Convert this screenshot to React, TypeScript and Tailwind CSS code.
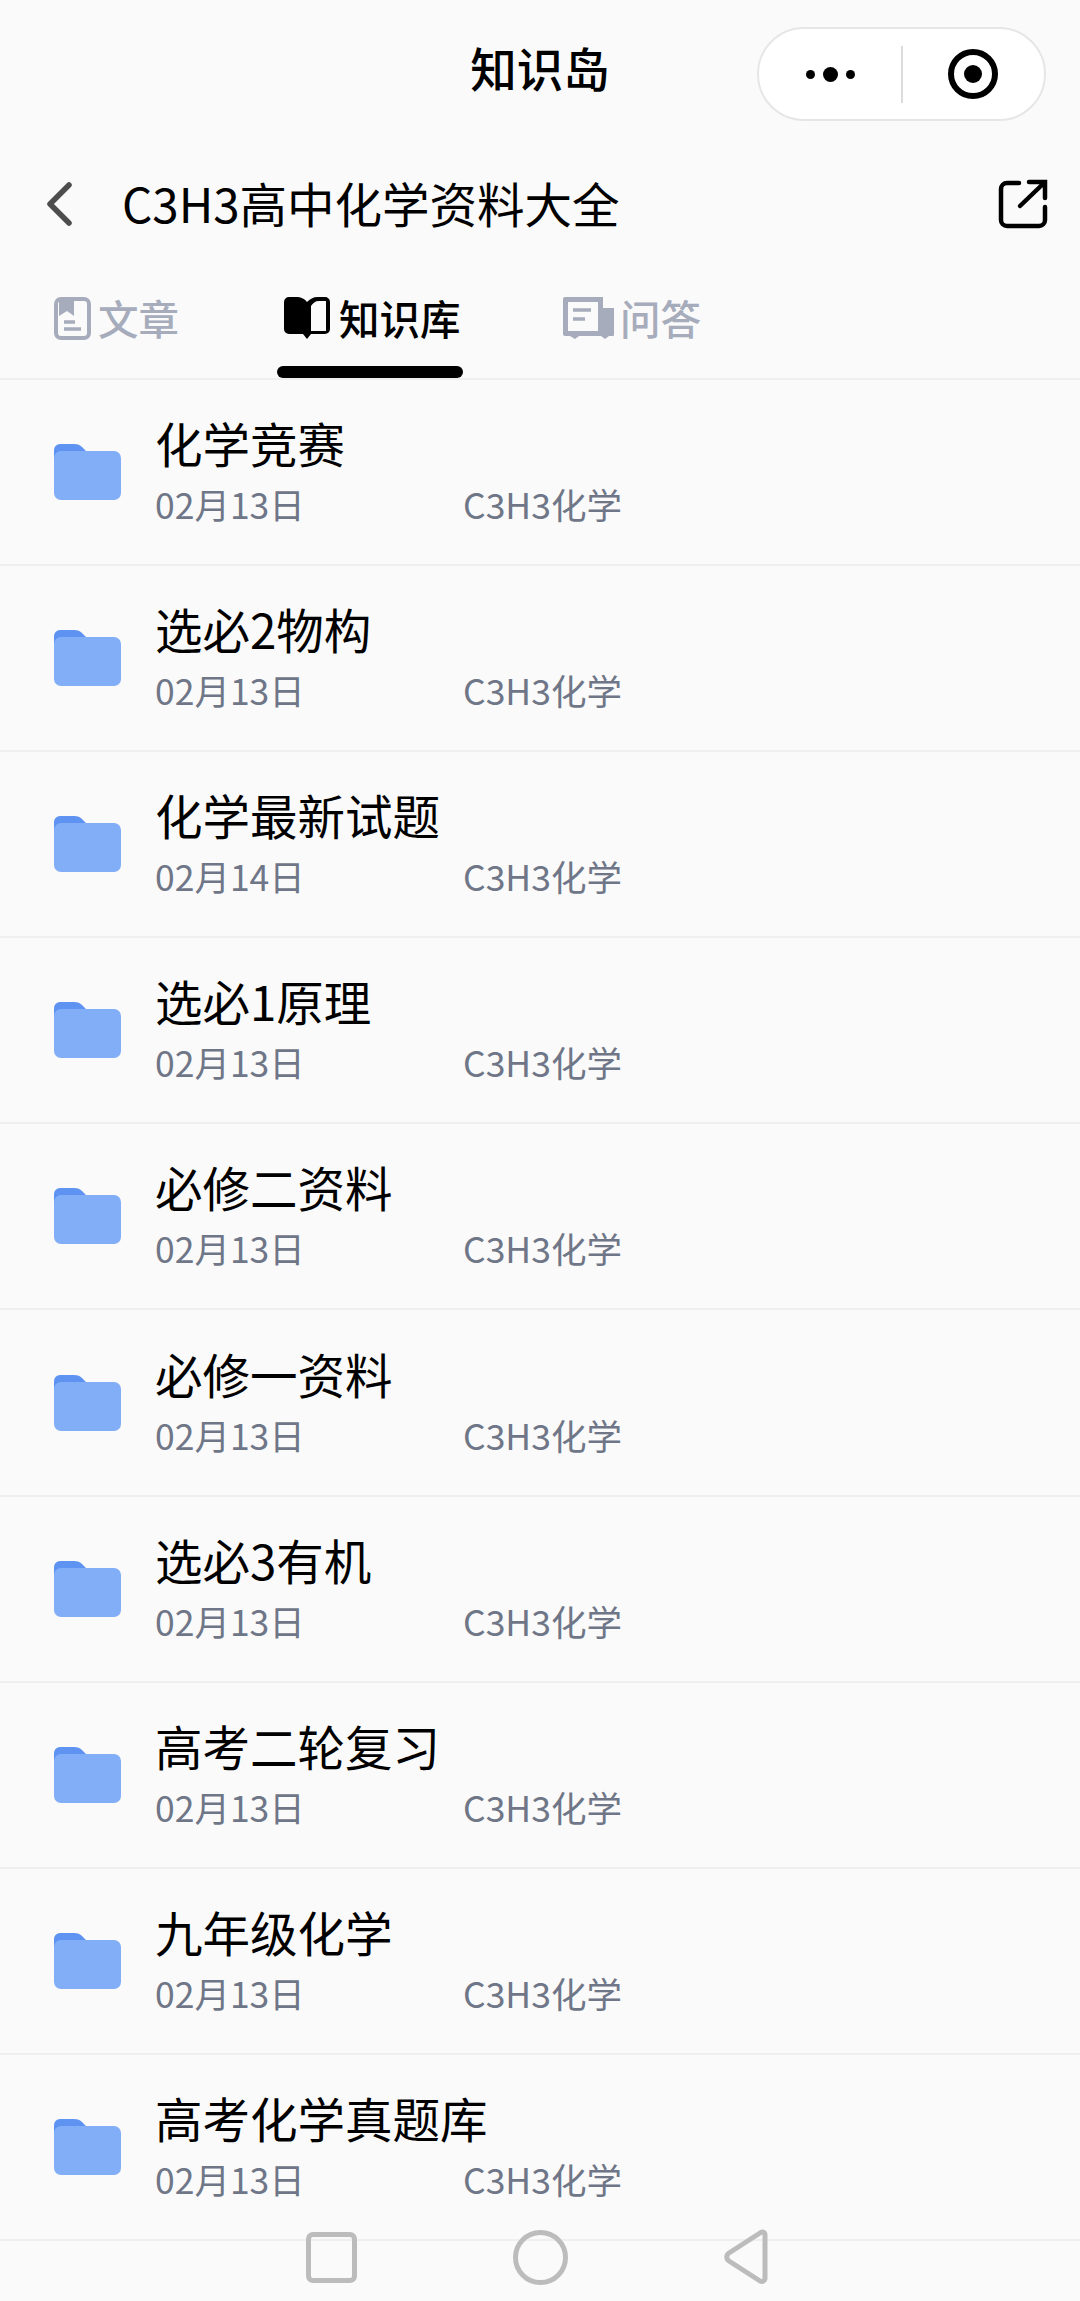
const FONT = "font-['Noto_Sans_CJK_SC','Noto_Sans',sans-serif]";

const rows = [
  ["化学竞赛", "02月13日"],
  ["选必2物构", "02月13日"],
  ["化学最新试题", "02月14日"],
  ["选必1原理", "02月13日"],
  ["必修二资料", "02月13日"],
  ["必修一资料", "02月13日"],
  ["选必3有机", "02月13日"],
  ["高考二轮复习", "02月13日"],
  ["九年级化学", "02月13日"],
  ["高考化学真题库", "02月13日"],
];

function Folder() {
  return (
    <svg width="68" height="56" viewBox="0 0 68 56" className="shrink-0">
      <path d="M0 6a6 6 0 0 1 6-6h14c4 0 6 1 8 3l5 5H22L10 14H0z" fill="#5f93f2" />
      <rect x="0" y="7" width="67" height="49" rx="7" fill="#82aef8" />
    </svg>
  );
}

function Row({ title, date }: { title: string; date: string }) {
  return (
    <div className="flex h-[186.1px] items-center border-b-2 border-[#efefef] pl-[54px]">
      <Folder />
      <div className="ml-[33px] flex flex-col">
        <div className="-mt-[2px] h-[54px] text-[47.5px] leading-[54px] text-black">{title}</div>
        <div className="mt-[12px] flex h-[44px] items-center text-[35.5px] leading-[44px] text-[#6f7687]">
          <span className="w-[308px]">{date}</span>
          <span>C3H3化学</span>
        </div>
      </div>
    </div>
  );
}

export default function App() {
  return (
    <div className={`relative h-[2301px] w-[1080px] overflow-hidden bg-[#fafafa] ${FONT}`}>
      <header className="relative flex h-[145px] items-center justify-center pb-[11px]">
        <h1 className="text-[46.5px] font-medium leading-none text-black">知识岛</h1>
        <div className="absolute left-[757px] top-[27px] flex h-[94px] w-[289px] items-center rounded-full border-2 border-[#e6e6e6] bg-white">
          <div className="flex w-[142px] items-center justify-end gap-[8px] pr-[46px]">
            <span className="size-[9px] rounded-full bg-black" />
            <span className="size-[15px] rounded-full bg-black" />
            <span className="size-[9px] rounded-full bg-black" />
          </div>
          <div className="h-[57px] w-[2px] bg-[#dcdcdc]" />
          <div className="ml-[45px] flex size-[50px] items-center justify-center rounded-full border-[6px] border-black">
            <span className="size-[18px] rounded-full bg-black" />
          </div>
        </div>
      </header>
      <div className="flex h-[118px] items-center">
        <svg width="30" height="44" viewBox="0 0 30 44" className="ml-[45px] shrink-0">
          <path d="M24 3 5 22l19 19" fill="none" stroke="#4d4d4d" strokeWidth="5.500" strokeLinecap="round" strokeLinejoin="round" />
        </svg>
        <div className="ml-[47px] grow pb-[2px] text-[47.5px] leading-none text-black">C3H3高中化学资料大全</div>
        <svg width="50" height="50" viewBox="0 0 50 50" className="mr-[32px] shrink-0">
          <path d="M21 4H9a6 6 0 0 0-6 6v31a6 6 0 0 0 6 6h32a6 6 0 0 0 6-6V28" fill="none" stroke="#000" strokeWidth="4.500" strokeLinecap="round" />
          <path d="M22 27 46 4M31 3h16v16" fill="none" stroke="#000" strokeWidth="4.500" strokeLinecap="round" />
        </svg>
      </div>
      <nav className="flex h-[117px] border-b-2 border-[#efefef] text-[40.5px] font-medium leading-none">
        <div className="ml-[54px] mt-[31px] flex h-[48px] items-center gap-[7px] text-[#a6acbb]">
          <svg width="37" height="43" viewBox="0 0 37 43">
            <rect x="2" y="2" width="33" height="39" rx="5" fill="none" stroke="#a6acbb" strokeWidth="4" />
            <path d="M5 3h15v16l-7-5-8 5z" fill="#a6acbb" />
            <path d="M10 25h11M10 32h17" stroke="#a6acbb" strokeWidth="3.500" />
          </svg>
          <span>文章</span>
        </div>
        <div className="relative ml-[98px] mt-[31px] flex h-[86px] w-[186px] items-start">
          <div className="flex h-[48px] items-center gap-[9px] pl-[7px] text-black">
            <svg width="46" height="42" viewBox="0 0 46 42">
              <path d="M0 5a5 5 0 0 1 5-5h7c5 0 9 2 11 5v37l-4-5H5a5 5 0 0 1-5-5z" fill="#000" />
              <path d="M23 5c3-3 6-5 11-5h7a5 5 0 0 1 5 5v27a5 5 0 0 1-5 5H27l-4 5V8zm4 4v25h15V4h-7c-4 0-6 2-8 5z" fill="#000" />
            </svg>
            <span>知识库</span>
          </div>
          <div className="absolute bottom-[2px] left-0 h-[12px] w-[186px] rounded-full bg-black" />
        </div>
        <div className="ml-[100px] mt-[31px] flex h-[48px] items-center gap-[6px] text-[#a6acbb]">
          <svg width="51" height="42" viewBox="0 0 51 42">
            <path d="M0 2a2 2 0 0 1 2-2h38v11h11v27a1 1 0 0 1-1 1H46l-4 3-4-3H16l-4 3-5-3H2a2 2 0 0 1-2-2z" fill="#a6acbb" />
            <path d="M5 5h30v29H5z" fill="#fafafa" />
            <path d="M10 13h18M10 22h12" stroke="#a6acbb" strokeWidth="3.500" />
          </svg>
          <span>问答</span>
        </div>
      </nav>
      <main>
        {rows.map(([t, d], i) => (
          <Row key={i} title={t} date={d} />
        ))}
      </main>
      <div className="absolute bottom-[16px] left-[306px] flex h-[56px] items-center">
        <span className="h-[51px] w-[51px] rounded-[7px] border-[5px] border-[#bcbcbc]" />
        <span className="ml-[156px] h-[55px] w-[55px] rounded-full border-[5px] border-[#bcbcbc]" />
        <svg width="46" height="56" viewBox="0 0 46 56" className="ml-[155px]">
          <path d="M42 6c0-3-3-4-5-2L6 24c-3 2-3 6 0 8l31 20c2 1 5 0 5-3z" fill="none" stroke="#bcbcbc" strokeWidth="5" strokeLinejoin="round" />
        </svg>
      </div>
    </div>
  );
}
